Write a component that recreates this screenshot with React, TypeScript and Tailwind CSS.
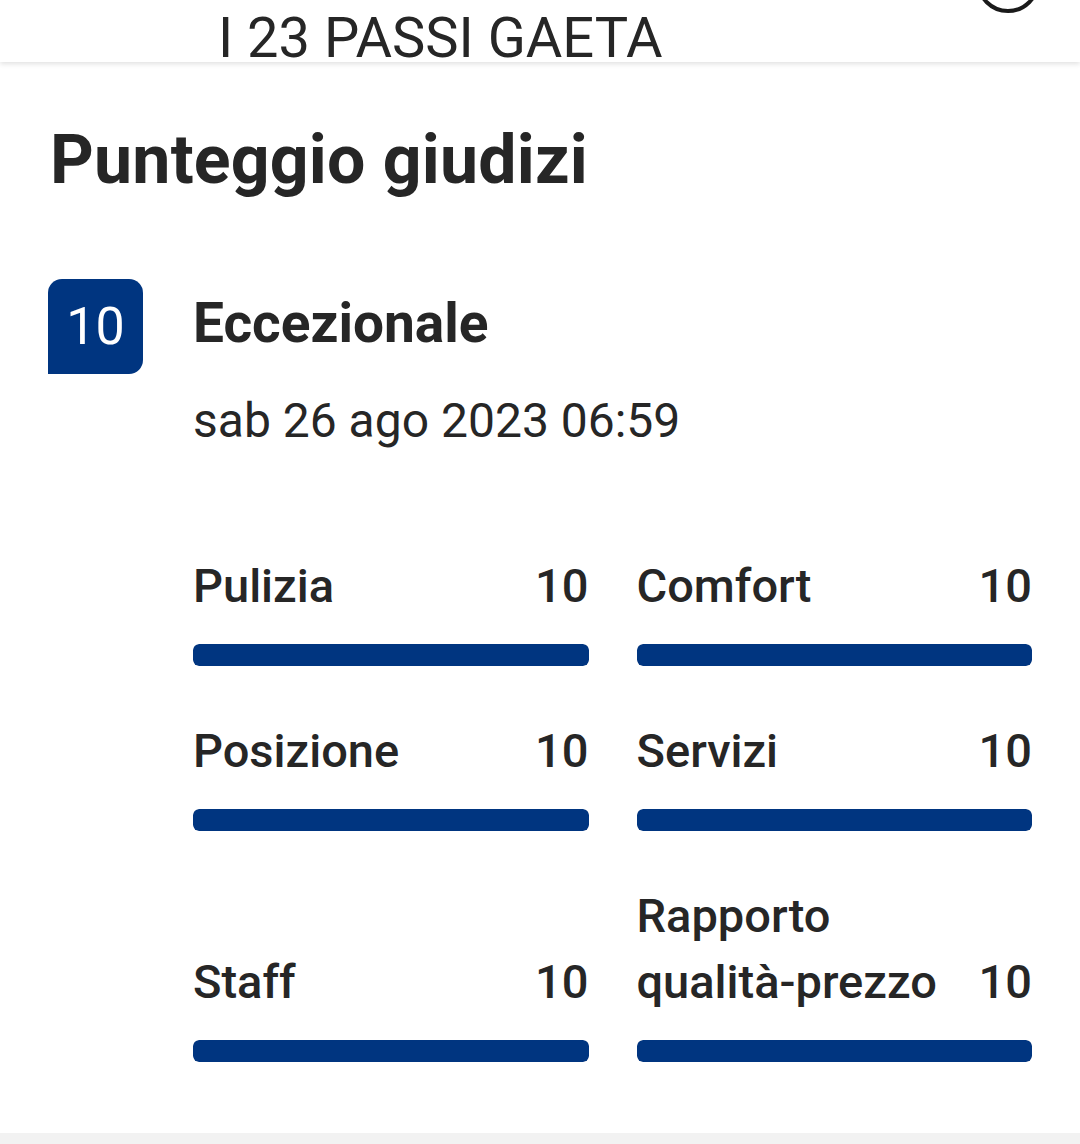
import React from 'react'

const SCORES = [
  { label: 'Pulizia', value: 10 },
  { label: 'Comfort', value: 10 },
  { label: 'Posizione', value: 10 },
  { label: 'Servizi', value: 10 },
  { label: 'Staff', value: 10 },
  { label: 'Rapporto qualità-prezzo', value: 10 },
]

function ScoreItem({ label, value }: { label: string; value: number }) {
  return (
    <div className="flex flex-col pb-[52px]">
      <div className="flex-1 flex items-end justify-between gap-[36px] text-[47px] leading-[66px] font-medium text-[#262626]">
        <span>{label}</span>
        <span className="shrink-0">{value}</span>
      </div>
      <div className="mt-[25px] h-[22px] w-full rounded-[6px] bg-[#e7e7e7] overflow-hidden">
        <div className="h-full rounded-[6px] bg-[#003580]" style={{ width: `${value * 10}%` }} />
      </div>
    </div>
  )
}

export default function App() {
  return (
    <div className="w-[1080px] h-[1144px] bg-white flex flex-col overflow-hidden" style={{ fontFamily: 'Roboto, "Noto Sans", sans-serif' }}>
      {/* Header */}
      <div className="relative h-[62px] shrink-0 bg-white shadow-[0_2px_5px_rgba(0,0,0,0.12)] z-10">
        <div className="pl-[218px] pt-[10px] text-[56px] leading-none font-normal text-[#262626]">
          I 23 PASSI GAETA
        </div>
        <div className="absolute right-[40px] top-[-51px] w-[64px] h-[64px] rounded-full border-[4px] border-[#1a1a1a]" />
      </div>

      {/* Content */}
      <div className="flex-1 flex flex-col pl-[50px] pr-[48px]">
        <h1 className="mt-[64px] text-[68px] leading-none font-bold tracking-[0.2px] text-[#262626]">Punteggio giudizi</h1>

        <div className="mt-[85px] flex items-start -ml-[2px]">
          <div className="w-[95px] h-[95px] shrink-0 flex items-center justify-center rounded-t-[14px] rounded-br-[14px] bg-[#003580] text-white text-[52px] leading-none">
            10
          </div>
          <div className="ml-[50px] flex-1 flex flex-col">
            <div className="mt-[17px] text-[55px] leading-none font-bold text-[#262626]">Eccezionale</div>
            <div className="mt-[46px] text-[48px] leading-none text-[#262626]">sab 26 ago 2023 06:59</div>

            <div className="mt-[108px] grid grid-cols-2 gap-x-[48px]">
              {SCORES.map((s) => (
                <ScoreItem key={s.label} label={s.label} value={s.value} />
              ))}
            </div>
          </div>
        </div>
      </div>

      <div className="h-[11px] shrink-0 bg-[#f2f2f2]" />
    </div>
  )
}
